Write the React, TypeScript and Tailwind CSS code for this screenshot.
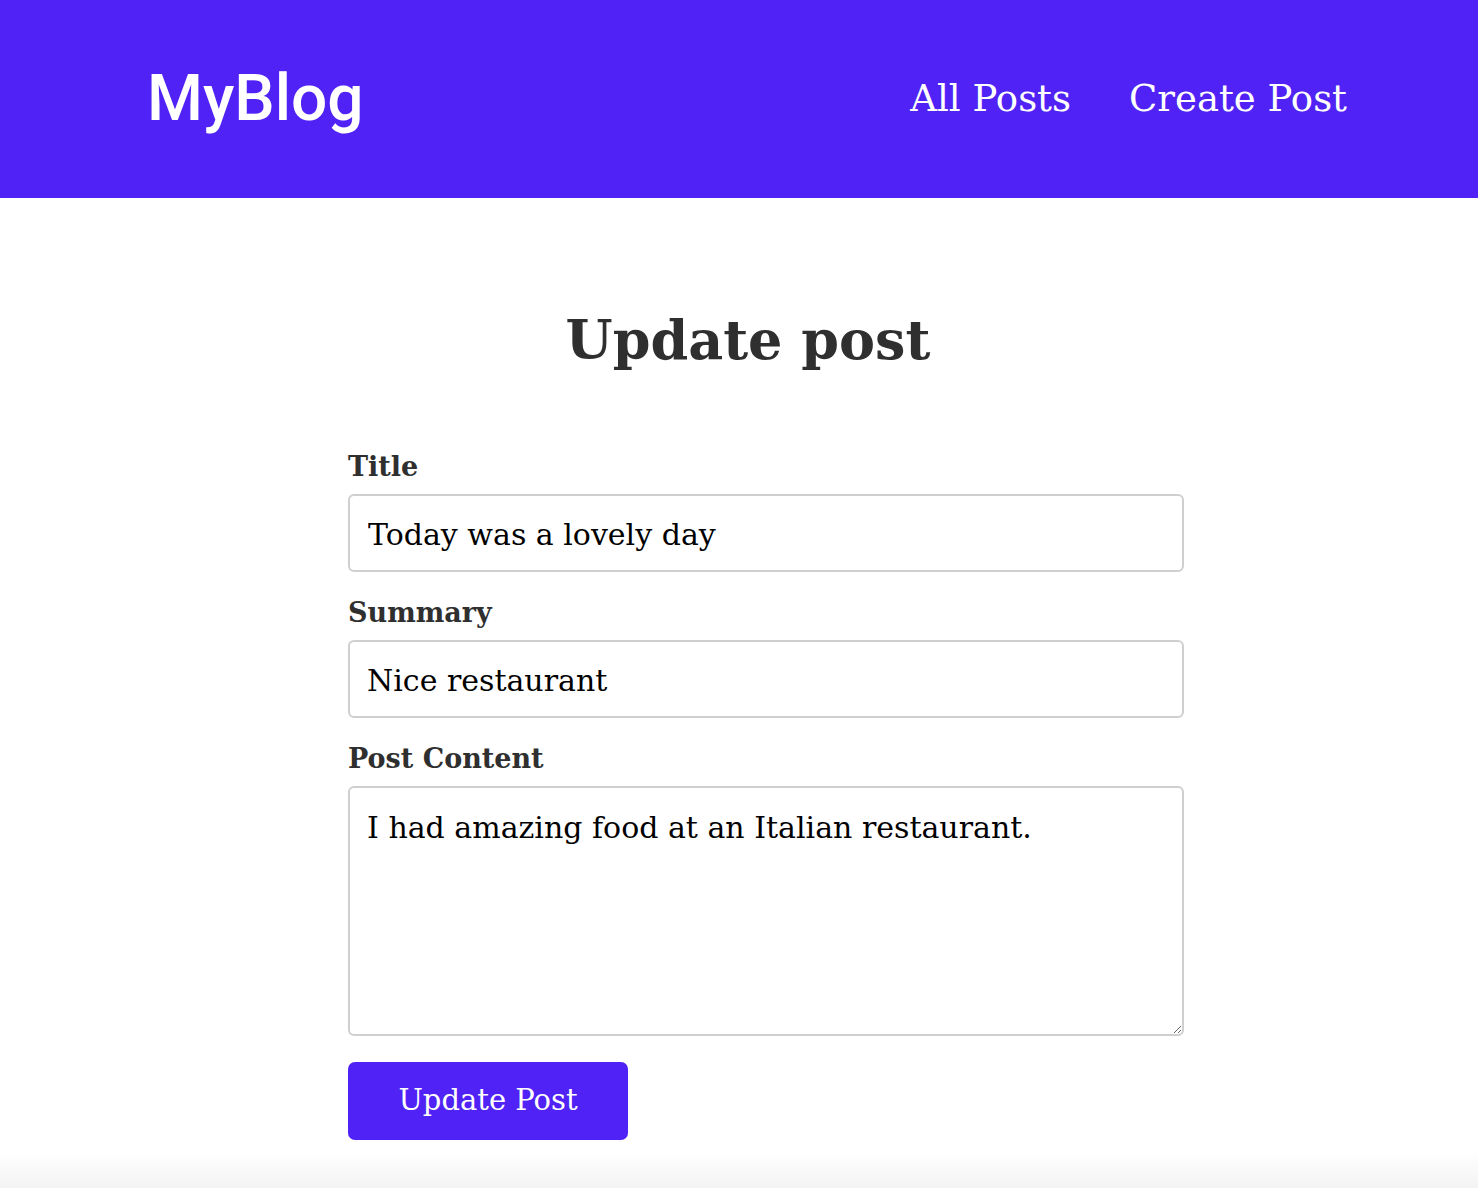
export default function App() {
  const slab = "font-['DejaVu_Serif',serif]";

  return (
    <div className="min-h-[1188px] bg-white flex flex-col">
      <header className="h-[198px] bg-[#5022f6] flex items-center justify-between pl-[147px] pr-[131px]">
        <a className="font-['Roboto',sans-serif] font-medium text-[64px] text-white leading-none">MyBlog</a>
        <nav className={`flex gap-[58px] text-white text-[37px] ${slab}`}>
          <a>All Posts</a>
          <a>Create Post</a>
        </nav>
      </header>

      <main className={`flex-1 flex flex-col items-center pt-[115px] ${slab}`}>
        <h1 className="text-[54px] font-bold text-[#2f2f30] leading-none ml-[18px]">Update post</h1>
        <form className="w-[836px] ml-[54px] mt-[86px] flex flex-col">
          <label className="text-[27px] font-bold text-[#2f2f30] leading-none mb-[14px]">Title</label>
          <input
            defaultValue="Today was a lovely day"
            className="h-[78px] px-[18px] pt-[3px] border-2 border-[#cfcfcf] rounded-[6px] text-[30px] text-black outline-none"
          />
          <label className="text-[27px] font-bold text-[#2f2f30] leading-none mt-[27px] mb-[14px]">Summary</label>
          <input
            defaultValue="Nice restaurant"
            className="h-[78px] px-[17px] pt-[3px] border-2 border-[#cfcfcf] rounded-[6px] text-[30px] text-black outline-none"
          />
          <label className="text-[27px] font-bold text-[#2f2f30] leading-none mt-[27px] mb-[14px]">Post Content</label>
          <textarea
            defaultValue="I had amazing food at an Italian restaurant."
            className="h-[250px] px-[17px] pt-[22px] border-2 border-[#cfcfcf] rounded-[6px] text-[30px] text-black leading-[1.2] outline-none resize-y"
          />
          <button
            type="button"
            className="mt-[26px] w-[280px] h-[78px] bg-[#5022f6] text-white text-[29px] rounded-[7px]"
          >
            Update Post
          </button>
        </form>
        <div className="mt-auto h-[36px] w-full bg-gradient-to-b from-white to-[#f3f3f3]" />
      </main>
    </div>
  );
}
